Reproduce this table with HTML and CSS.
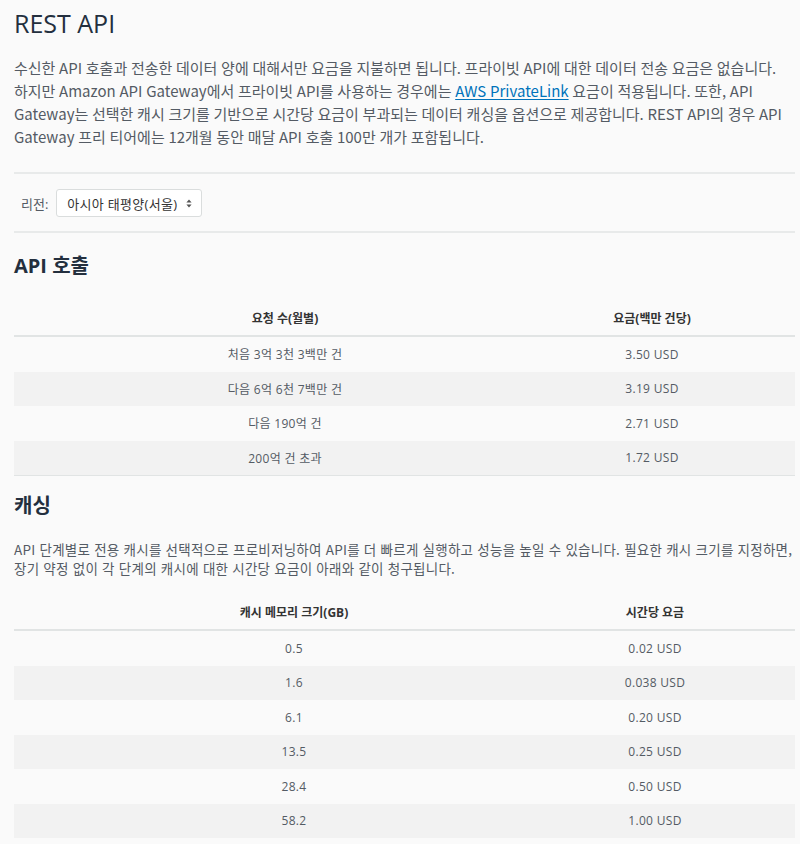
FILE: index.html
```html
<!DOCTYPE html>
<html lang="ko">
<head>
<meta charset="utf-8">
<title>REST API</title>
<link rel="stylesheet" href="styles.css">
</head>
<body>
<main class="page">
  <h1 class="title">REST API</h1>
  <p class="intro">수신한 API 호출과 전송한 데이터 양에 대해서만 요금을 지불하면 됩니다. 프라이빗 API에 대한 데이터 전송 요금은 없습니다. 하지만 Amazon API Gateway에서 프라이빗 API를 사용하는 경우에는 <a class="link" href="#">AWS PrivateLink</a> 요금이 적용됩니다. 또한, API Gateway는 선택한 캐시 크기를 기반으로 시간당 요금이 부과되는 데이터 캐싱을 옵션으로 제공합니다. REST API의 경우 API Gateway 프리 티어에는 12개월 동안 매달 API 호출 100만 개가 포함됩니다.</p>

  <div class="region">
    <span class="region-label">리전:</span>
    <div class="select">
      <span>아시아 태평양(서울)</span>
      <svg class="select-arrow" width="6" height="9" viewBox="0 0 6 9"><path d="M3 0.5 L5.6 3.6 H0.4 Z M3 8.5 L5.6 5.4 H0.4 Z" fill="#555"/></svg>
    </div>
  </div>

  <h2 class="section-title first">API 호출</h2>
  <table class="price-table">
    <thead>
      <tr><th class="c1">요청 수(월별)</th><th class="c2">요금(백만 건당)</th></tr>
    </thead>
    <tbody>
      <tr><td class="c1">처음 3억 3천 3백만 건</td><td class="c2">3.50 USD</td></tr>
      <tr><td class="c1">다음 6억 6천 7백만 건</td><td class="c2">3.19 USD</td></tr>
      <tr><td class="c1">다음 190억 건</td><td class="c2">2.71 USD</td></tr>
      <tr><td class="c1">200억 건 초과</td><td class="c2">1.72 USD</td></tr>
    </tbody>
  </table>

  <h2 class="section-title">캐싱</h2>
  <p class="desc">API 단계별로 전용 캐시를 선택적으로 프로비저닝하여 API를 더 빠르게 실행하고 성능을 높일 수 있습니다. 필요한 캐시 크기를 지정하면, 장기 약정 없이 각 단계의 캐시에 대한 시간당 요금이 아래와 같이 청구됩니다.</p>
  <table class="price-table cache">
    <thead>
      <tr><th class="c1">캐시 메모리 크기(GB)</th><th class="c2">시간당 요금</th></tr>
    </thead>
    <tbody>
      <tr><td class="c1">0.5</td><td class="c2">0.02 USD</td></tr>
      <tr><td class="c1">1.6</td><td class="c2">0.038 USD</td></tr>
      <tr><td class="c1">6.1</td><td class="c2">0.20 USD</td></tr>
      <tr><td class="c1">13.5</td><td class="c2">0.25 USD</td></tr>
      <tr><td class="c1">28.4</td><td class="c2">0.50 USD</td></tr>
      <tr><td class="c1">58.2</td><td class="c2">1.00 USD</td></tr>
    </tbody>
  </table>
</main>
</body>
</html>
```

FILE: styles.css
```css
html, body {
  margin: 0;
  padding: 0;
  background: #fafafa;
}
body {
  font-family: "Open Sans", "Noto Sans CJK KR", sans-serif;
  color: #545b64;
}
.page {
  padding: 8px 5px 0 14px;
}
.title {
  margin: 0;
  font-size: 25px;
  line-height: 31px;
  font-weight: 400;
  color: #232f3e;
}
.intro {
  margin: 17px 0 0;
  padding-right: 2px;
  font-family: "Noto Sans CJK KR", sans-serif;
  font-size: 15px;
  letter-spacing: 0;
  word-spacing: -0.5px;
  line-height: 23px;
  color: #545b64;
}
.link {
  color: #0073bb;
  text-decoration: underline;
  text-underline-offset: 2px;
}
.region {
  margin-top: 24px;
  border-top: 2px solid #e8eaea;
  border-bottom: 2px solid #e8eaea;
  padding: 15px 0 14px 7px;
  display: flex;
  align-items: center;
  gap: 8px;
}
.region-label {
  font-size: 13px;
  color: #545b64;
}
.select {
  width: 146px;
  height: 28px;
  box-sizing: border-box;
  border: 1px solid #dadddd;
  border-radius: 3px;
  background: #fff;
  display: flex;
  align-items: center;
  justify-content: space-between;
  padding: 0 9px 0 10px;
  font-size: 13px;
  letter-spacing: 0.3px;
  color: #333;
}
.section-title {
  margin: 18px 0 0;
  font-size: 20px;
  line-height: 24px;
  font-weight: 700;
  color: #232f3e;
}
.section-title.first {
  margin-top: 21px;
}
.price-table {
  width: 100%;
  table-layout: fixed;
  border-collapse: collapse;
  margin-top: 23px;
  font-size: 12px;
  letter-spacing: 0.3px;
  color: #545b64;
}
.price-table th {
  height: 34px;
  padding: 0;
  font-weight: 700;
  color: #333;
  letter-spacing: 0;
  border-bottom: 2px solid #e1e4e4;
  vertical-align: middle;
}
.price-table td {
  height: 34.5px;
  padding: 0;
  vertical-align: middle;
}
.price-table tbody tr:nth-child(even) td {
  background: #f2f2f2;
}
.price-table tbody tr:last-child td {
  border-bottom: 1px solid #e1e4e4;
}
.cache tbody tr:last-child td {
  border-bottom: 0;
}
.price-table .c1 {
  width: 542px;
  text-align: center;
}
.price-table .c2 {
  text-align: center;
  padding-right: 47px;
}
.cache .c1 {
  width: 560px;
}
.cache .c2 {
  padding-right: 59px;
}
.desc {
  margin: 22px 0 0;
  padding-right: 2px;
  font-family: "Noto Sans CJK KR", sans-serif;
  font-size: 13.5px;
  letter-spacing: 0.25px;
  line-height: 19px;
  color: #545b64;
}
.cache {
  margin-top: 17px;
}
```
